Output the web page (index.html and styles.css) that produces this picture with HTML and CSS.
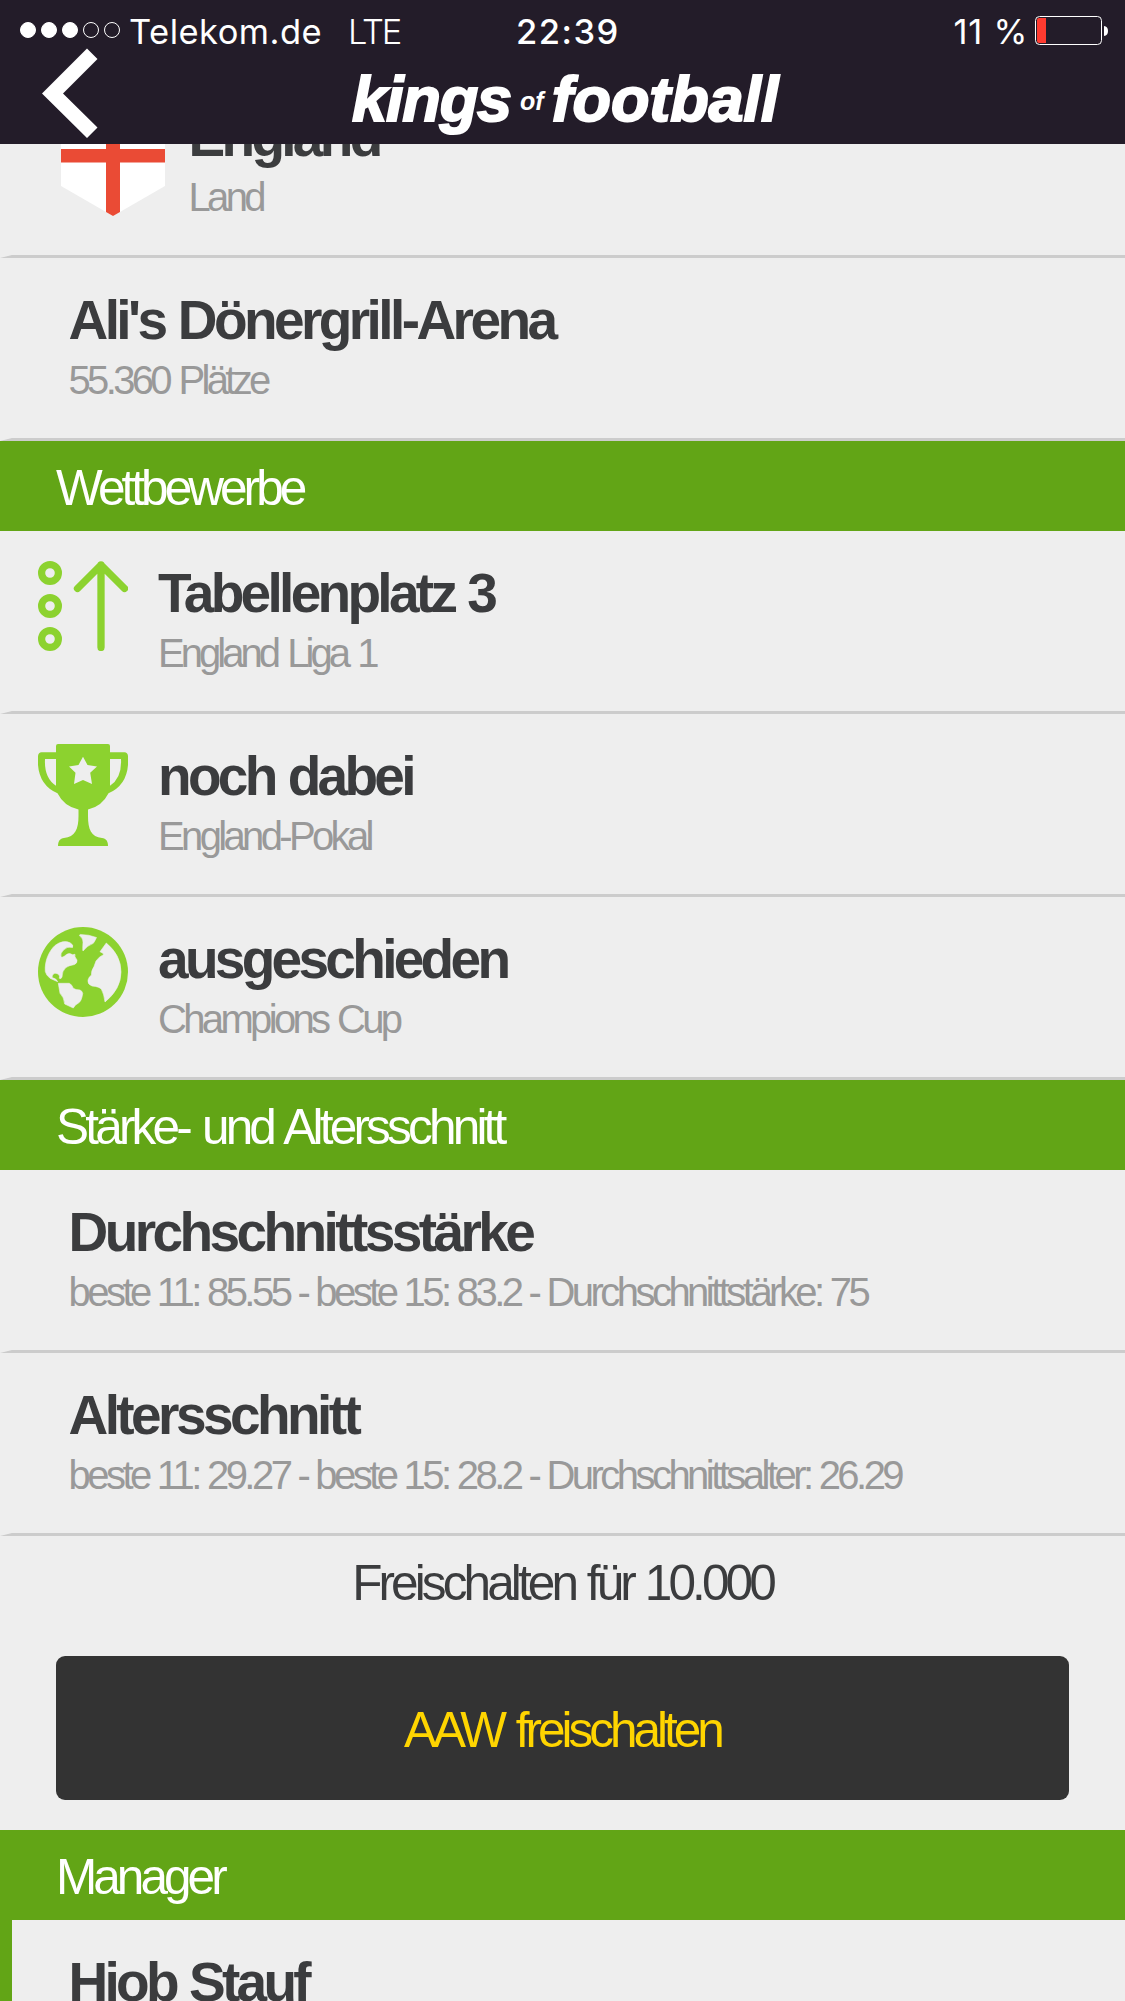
FILE: index.html
```
<!DOCTYPE html>
<html lang="de">
<head>
<meta charset="utf-8">
<title>Kings of Football</title>
<link rel="stylesheet" href="styles.css">
</head>
<body>
<div class="screen">
  <header class="header">
    <div class="status">
      <div class="status-left">
        <span class="dots"><i class="dot on"></i><i class="dot on"></i><i class="dot on"></i><i class="dot"></i><i class="dot"></i></span>
        <span class="carrier">Telekom.de</span>
        <span class="network">LTE</span>
      </div>
      <span class="clock">22:39</span>
      <div class="status-right">
        <span class="charge">11 %</span>
        <svg class="battery" viewBox="0 0 73 29">
          <rect x=".5" y=".5" width="66" height="28" rx="4" fill="none" stroke="#fff"/>
          <path d="M11 2H4Q2 2 2 4V25Q2 27 4 27H11Z" fill="#ff3b30"/>
          <path d="M69 10Q73 10.500 73 15T69 20Z" fill="#fff"/>
        </svg>
      </div>
    </div>
    <nav class="nav">
      <svg class="back" viewBox="0 0 56 90"><path d="M45 0.500L55.500 11L21 45.500L55.500 79.500L45 90L0 45.500Z" fill="#fff"/></svg>
      <div class="logo"><span class="kings">kings</span><span class="of">of</span><span class="football">football</span></div>
    </nav>
  </header>

  <main class="content">
    <section class="row row-flag">
      <svg class="flag" viewBox="0 0 104 116">
        <path d="M0 0H104V86L52 116L0 86Z" fill="#fff"/>
        <path d="M45 0H59V112L52 116L45 112ZM0 49H104V62.500H0Z" fill="#ea4b35"/>
      </svg>
      <div class="text"><h3 class="title">England</h3><p class="sub">Land</p></div>
    </section>
    <section class="row">
      <div class="text"><h3 class="title title-wide">Ali's Dönergrill-Arena</h3><p class="sub">55.360 Plätze</p></div>
    </section>

    <h2 class="bar bar-tight">Wettbewerbe</h2>
    <section class="row row-icon">
      <svg class="icon" viewBox="0 0 90 90" fill="none" stroke="#8cd22f">
        <g stroke-width="7.200"><circle cx="12" cy="12" r="8.400"/><circle cx="12" cy="45" r="8.400"/><circle cx="12" cy="78" r="8.400"/></g>
        <path d="M63 86.500V4M39.500 27.500L63 4L86.500 27.500" stroke-width="7.300" stroke-linecap="round" stroke-linejoin="round"/>
      </svg>
      <div class="text"><h3 class="title">Tabellenplatz 3</h3><p class="sub sub-tight">England Liga 1</p></div>
    </section>
    <section class="row row-icon">
      <svg class="icon icon-tall" viewBox="0 0 90 102" fill="#8cd22f">
        <path fill-rule="evenodd" d="M20 0H70Q72 0 72 2V8.300H86.500Q89.500 8.300 90 12Q92 40 70.500 49.300Q64 62.500 50 65.500V72C50 85 53 93 64 94C68 94.500 70 97 70 102H20C20 97 22 94.500 26 94C37 93 40.500 85 40.500 72V65.500Q26 62.500 19.500 49.300Q-2 40 0 12Q.5 8.300 3.500 8.300H18V2Q18 0 20 0ZM7 15Q6 34 18 41.700V15ZM83 15H72V41.700Q84 34 83 15ZM45 12.700L40.500 21L31 22.500L37.500 28.700L36 40L45 36L54 40L52.200 28.700L59 22.500L49.500 21Z"/>
      </svg>
      <div class="text"><h3 class="title">noch dabei</h3><p class="sub">England-Pokal</p></div>
    </section>
    <section class="row row-icon">
      <svg class="icon" viewBox="0 0 90 90">
        <circle cx="45" cy="45" r="45" fill="#8cd22f"/>
        <g fill="#eee" stroke="#eee" stroke-width=".6" stroke-linejoin="round">
          <path d="M17 18.500Q25 12.500 32 15.700Q36 18 34.500 20.500Q29 19 25.500 23Q22 26.500 23 29.500Q24 31.500 28.500 27.500Q31 25.500 34.700 27.700L37 27.300Q36 29.500 39 33Q39.500 36 36.500 37.500Q30 38.700 27.700 40.700Q24 44 24 50Q23 52.500 21.300 51.300Q22.500 47.500 18 46.300Q14.500 46 14 50.500Q18.500 51.500 19.700 54.700L12 51.300Q8 48 7.300 44.500C6.500 34 11 24 17 18.500Z"/>
          <path d="M20.300 56.300H31.300Q34.500 58 35.300 61.300Q37.500 63 42 63Q44.500 64 44.700 66.500Q43.500 74.500 40.500 76Q36.500 78 35.300 81L26.700 77Q26 70 22 66.300Z"/>
          <path d="M41.300 8.300L42.300 7.500Q51 7.500 58.500 10.500Q57 14 55.300 16.300Q49.500 18.500 45 24Q44.500 23.500 45 15.300Q45.500 12 41.300 8.300Z"/>
          <path d="M68.300 16Q83 28 83 45Q83 62 67 75Q66 67 63.500 62.500Q61.500 59.500 54 59Q49 57 50 53Q51 49.500 53.500 48Q53 44 56 39.500L58 34Q61 29.500 65.500 27.700L65 26.300L62 24.700Z"/>
        </g>
      </svg>
      <div class="text"><h3 class="title">ausgeschieden</h3><p class="sub">Champions Cup</p></div>
    </section>

    <h2 class="bar">Stärke- und Altersschnitt</h2>
    <section class="row">
      <div class="text"><h3 class="title title-wide">Durchschnittsstärke</h3><p class="sub sub-long">beste 11: 85.55 - beste 15: 83.2 - Durchschnittstärke: 75</p></div>
    </section>
    <section class="row">
      <div class="text"><h3 class="title title-wide">Altersschnitt</h3><p class="sub sub-long">beste 11: 29.27 - beste 15: 28.2 - Durchschnittsalter: 26.29</p></div>
    </section>

    <div class="unlock">
      <p class="price">Freischalten für 10.000</p>
      <button class="unlock-button" type="button">AAW freischalten</button>
    </div>

    <h2 class="bar bar-tight">Manager</h2>
    <section class="row row-manager">
      <div class="text"><h3 class="title">Hjob Stauf</h3></div>
    </section>
  </main>
</div>
</body>
</html>
```
FILE: styles.css
```
* { box-sizing: border-box; }

body {
  margin: 0;
  background: #eee;
  font-family: "Liberation Sans", Arial, sans-serif;
}

h2, h3, p { margin: 0; font-weight: 400; }

.screen {
  display: flex;
  flex-direction: column;
  width: 1125px;
  height: 2001px;
  overflow: hidden;
}

/* Header */
.header {
  flex: none;
  height: 144px;
  background: #231c29;
  color: #fff;
}

.status {
  display: grid;
  grid-template-columns: 516px 1fr auto;
  height: 48px;
  padding-right: 17px;
  font: 400 34.5px/63px Inter, sans-serif;
  white-space: nowrap;
}

.status-left { display: flex; padding-left: 20px; }
.dots { display: flex; gap: 5px; margin: 22px 9px 0 0; }
.dot { width: 16px; height: 16px; border: 1px solid #fff; border-radius: 50%; }
.dot.on { background: #fff; }
.carrier { letter-spacing: .47px; }
.network { margin-left: 26px; font-weight: 300; letter-spacing: -2.2px; }
.clock { font-weight: 500; letter-spacing: 1.5px; }
.status-right { display: flex; gap: 7px; }
.charge { letter-spacing: .74px; }
.battery { width: 73px; height: 29px; margin-top: 16px; }

.nav { display: flex; height: 96px; padding-left: 42px; }
.back { flex: none; width: 56px; height: 90px; }
.logo {
  margin-left: 254px;
  padding-top: 3px;
  font-size: 63px;
  font-weight: 700;
  font-style: italic;
  line-height: 96px;
  white-space: nowrap;
  -webkit-text-stroke: 2px #fff;
}
.kings { letter-spacing: -1.1px; }
.football { letter-spacing: -.1px; }
.of {
  margin: 0 8px 0 9px;
  font-size: 25px;
  line-height: 1;
  vertical-align: 11px;
  -webkit-text-stroke: 0;
}

/* List */
.content { flex: 1; min-height: 0; overflow: hidden; }

.row {
  display: flex;
  height: 183px;
  padding-left: 56.5px;
  border-bottom: 3px solid #ccc;
  border-left: 12px solid #eee;
}
.row-flag { margin-top: -69px; padding-left: 49px; gap: 23.5px; }
.row-icon { padding-left: 26px; gap: 30px; }
.row-manager { border-left-color: #62a516; border-bottom: 0; }

.flag { flex: none; width: 104px; height: 116px; margin-top: 25px; }
.icon { flex: none; width: 90px; height: 90px; margin-top: 30px; }
.icon-tall { height: 102px; }

.text { padding-top: 32px; white-space: nowrap; }
.title {
  color: #3b3c3e;
  font-size: 55px;
  font-weight: 700;
  line-height: 60px;
  letter-spacing: -3.7px;
  word-spacing: 1.5px;
}
.title-wide { letter-spacing: -3.58px; }
.sub {
  margin-top: 5px;
  color: #999;
  font-size: 40px;
  line-height: 50px;
  letter-spacing: -3.65px;
  word-spacing: 2px;
}
.sub-tight { letter-spacing: -3.95px; word-spacing: 3px; }
.sub-long { letter-spacing: -3.53px; word-spacing: .5px; }

.bar {
  height: 90px;
  padding: 2px 0 0 56px;
  background: #62a516;
  color: #fff;
  font-size: 49.5px;
  line-height: 90px;
  letter-spacing: -3.8px;
  word-spacing: 3px;
}
.bar-tight { letter-spacing: -3.95px; }

/* Unlock */
.unlock {
  display: flex;
  flex-direction: column;
  height: 294px;
  padding: 2px 56px 30px;
}
.price {
  height: 118px;
  color: #3b3c3e;
  font-size: 49.5px;
  line-height: 90px;
  letter-spacing: -3.9px;
  word-spacing: 2px;
  text-align: center;
}
.unlock-button {
  height: 144px;
  padding: 3px 0 0;
  border: 0;
  border-radius: 9px;
  background: #333;
  color: #ffd500;
  font: 400 49.5px/141px "Liberation Sans", Arial, sans-serif;
  letter-spacing: -4px;
  word-spacing: 3px;
}
```
